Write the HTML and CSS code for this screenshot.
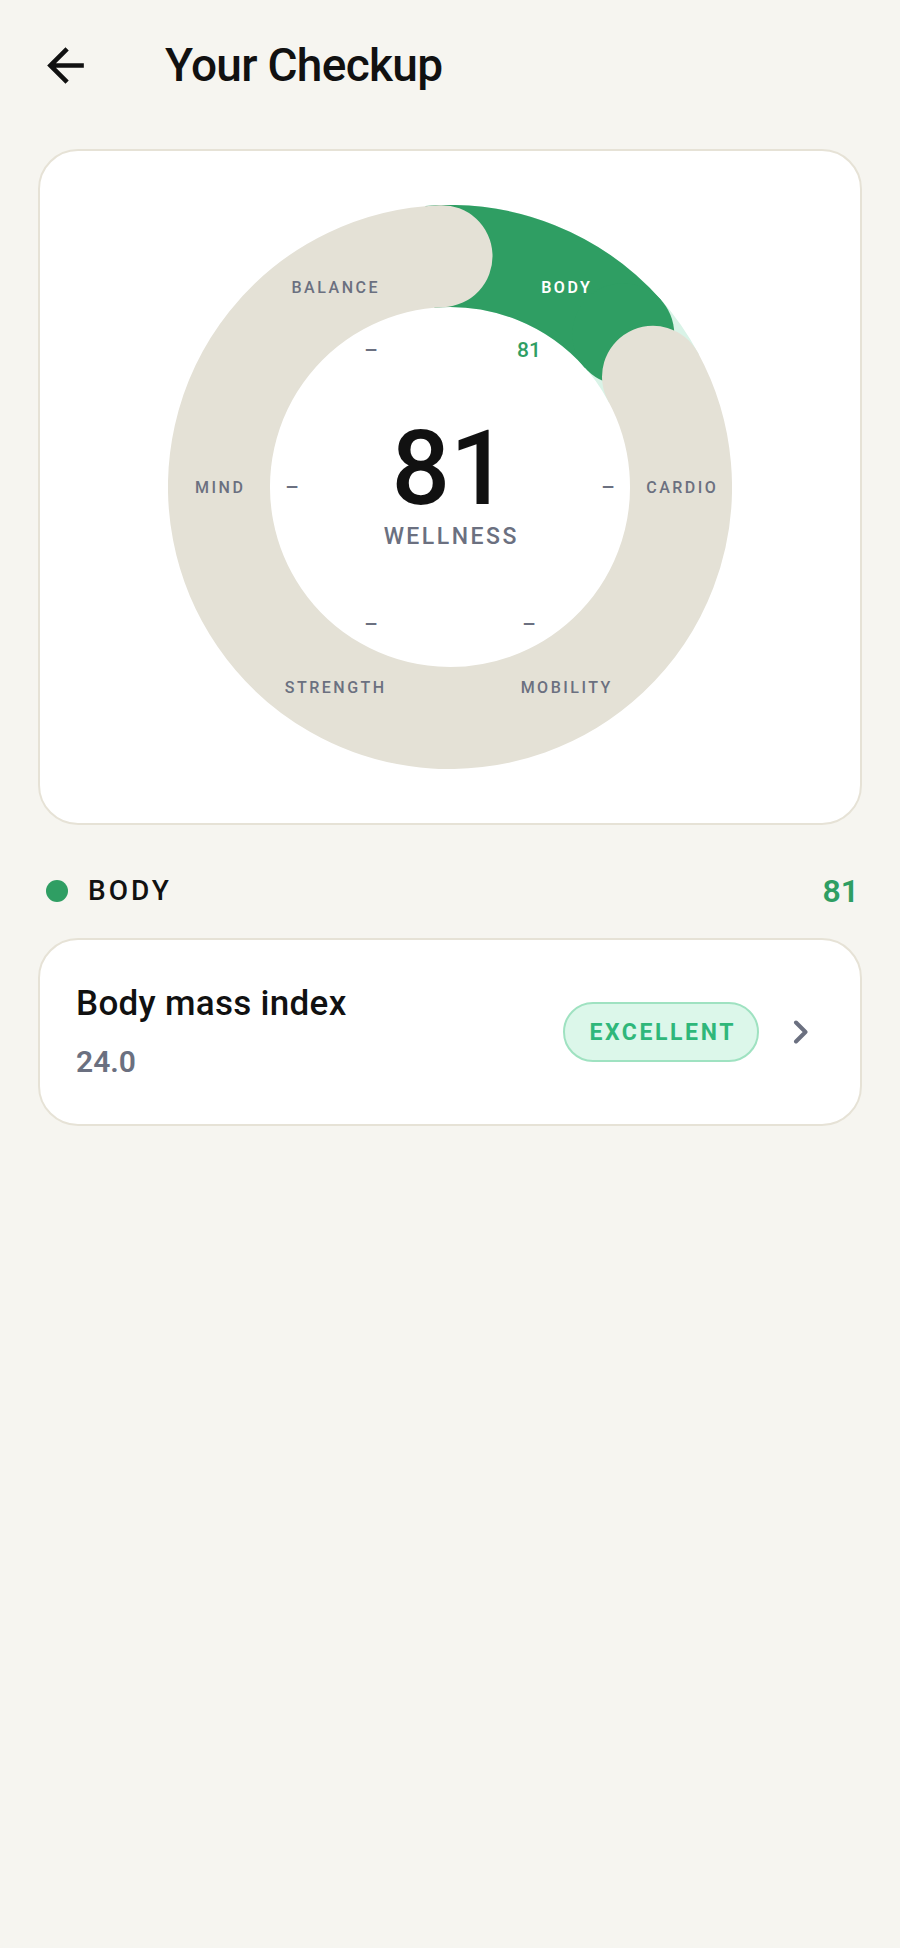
FILE: index.html
```html
<!DOCTYPE html>
<html lang="en">
<head>
<meta charset="utf-8">
<title>Your Checkup</title>
<link rel="stylesheet" href="styles.css">
</head>
<body>
<div class="page">
  <header class="header">
    <svg class="back" viewBox="0 0 24 24" width="55" height="55" aria-label="Back">
      <path d="M20 11H7.83l5.59-5.59L12 4l-8 8 8 8 1.41-1.41L7.83 13H20v-2z" fill="#111111"/>
    </svg>
    <h1 class="title">Your Checkup</h1>
  </header>

  <section class="wheel-card">
    <div class="wheel-wrap">
      <svg class="wheel" viewBox="0 0 564 564" width="564" height="564">
        <path class="track-mint" d="M 273.94 51.14 A 231 231 0 0 1 485.96 173.55"/>
        <path class="arc-green" d="M 261.87 51.88 A 231 231 0 0 1 455.28 129.24"/>
        <circle class="cap-green" cx="455.28" cy="129.24" r="51"/>
        <path class="arc-beige" d="M 485.01 171.78 A 231 231 0 1 1 273.54 51.16"/>

        <text class="seg-label" x="166.5" y="82" dx="1.25" dy="0.355em">BALANCE</text>
        <text class="seg-label active" x="397.5" y="82" dx="1.25" dy="0.355em">BODY</text>
        <text class="seg-label" x="513" y="282" dx="1.25" dy="0.355em">CARDIO</text>
        <text class="seg-label" x="397.5" y="482" dx="1.25" dy="0.355em">MOBILITY</text>
        <text class="seg-label" x="166.5" y="482" dx="1.25" dy="0.355em">STRENGTH</text>
        <text class="seg-label" x="51" y="282" dx="1.25" dy="0.355em">MIND</text>

        <text class="seg-value" x="203" y="145" dy="0.355em">–</text>
        <text class="seg-value green" x="361" y="145" dy="0.355em">81</text>
        <text class="seg-value" x="440" y="282" dy="0.355em">–</text>
        <text class="seg-value" x="361" y="419" dy="0.355em">–</text>
        <text class="seg-value" x="203" y="419" dy="0.355em">–</text>
        <text class="seg-value" x="124" y="282" dy="0.355em">–</text>
      </svg>
      <div class="center">
        <div class="score">81</div>
        <div class="score-label">WELLNESS</div>
      </div>
    </div>
  </section>

  <div class="section-row">
    <div class="section-name">
      <span class="dot"></span>
      <span class="section-title">BODY</span>
    </div>
    <span class="section-score">81</span>
  </div>

  <section class="metric-card">
    <div class="metric-text">
      <div class="metric-name">Body mass index</div>
      <div class="metric-value">24.0</div>
    </div>
    <span class="badge">EXCELLENT</span>
    <svg class="chevron" viewBox="0 0 16 24" width="16" height="24">
      <path d="M3 2.5 L12.5 12 L3 21.5" fill="none" stroke="#6b7080" stroke-width="4" stroke-linecap="round" stroke-linejoin="round"/>
    </svg>
  </section>
</div>
</body>
</html>
```

FILE: styles.css
```css
html, body {
  margin: 0;
  padding: 0;
  background: #f6f5f0;
}

body {
  font-family: "Roboto", "Noto Sans", sans-serif;
  color: #111111;
  min-height: 1948px;
}

.page {
  padding: 0 38px;
}

.header {
  display: flex;
  align-items: center;
  height: 55px;
  padding-top: 38px;
  margin-left: -0.5px;
}

.back {
  display: block;
  flex: none;
}

.title {
  margin: 0 0 0 72.5px;
  font-size: 46px;
  font-weight: 500;
  letter-spacing: -0.7px;
  line-height: 55px;
  color: #111111;
}

.wheel-card {
  margin-top: 56px;
  background: #ffffff;
  border: 2px solid #e6e2d6;
  border-radius: 40px;
  padding: 54px 0;
  display: flex;
  justify-content: center;
}

.wheel-wrap {
  position: relative;
  width: 564px;
  height: 564px;
}

.wheel {
  display: block;
}

.track-mint {
  fill: none;
  stroke: #d9f3e7;
  stroke-width: 102;
}

.arc-green {
  fill: none;
  stroke: #2f9e63;
  stroke-width: 102;
}

.cap-green {
  fill: #2f9e63;
}

.arc-beige {
  fill: none;
  stroke: #e4e1d6;
  stroke-width: 102;
  stroke-linecap: round;
}

.seg-label {
  font-family: "Roboto", sans-serif;
  font-size: 16px;
  font-weight: 500;
  letter-spacing: 2.5px;
  fill: #6b7080;
  text-anchor: middle;
}

.seg-label.active {
  fill: #ffffff;
  font-weight: 600;
}

.seg-value {
  font-family: "Roboto", sans-serif;
  font-size: 21px;
  font-weight: 500;
  fill: #6b7080;
  text-anchor: middle;
}

.seg-value.green {
  fill: #2f9e63;
}

.center {
  position: absolute;
  top: 225px;
  left: 0;
  right: 0;
  display: flex;
  flex-direction: column;
  align-items: center;
}

.score {
  font-size: 103px;
  font-weight: 500;
  line-height: 78px;
  color: #111111;
}

.score-label {
  margin-top: 17px;
  font-size: 23px;
  font-weight: 500;
  line-height: 24px;
  letter-spacing: 2.5px;
  margin-right: -2.5px;
  color: #6b7080;
}

.section-row {
  display: flex;
  align-items: center;
  justify-content: space-between;
  height: 32px;
  margin-top: 50px;
  padding: 0 3px 0 8px;
}

.section-name {
  display: flex;
  align-items: center;
  gap: 20px;
}

.dot {
  width: 22px;
  height: 22px;
  border-radius: 50%;
  background: #2f9e63;
}

.section-title {
  font-size: 28px;
  font-weight: 500;
  letter-spacing: 3px;
  color: #111111;
  line-height: 32px;
}

.section-score {
  font-size: 32px;
  font-weight: 600;
  color: #2f9e63;
  line-height: 32px;
}

.metric-card {
  margin-top: 31px;
  background: #ffffff;
  border: 2px solid #e6e2d6;
  border-radius: 40px;
  height: 184px;
  box-sizing: content-box;
  display: flex;
  align-items: center;
  padding: 0 51px 0 36px;
}

.metric-text {
  flex: 1;
  display: flex;
  flex-direction: column;
  gap: 20px;
}

.metric-name {
  font-size: 35px;
  font-weight: 500;
  letter-spacing: 0.3px;
  line-height: 40px;
  color: #111111;
}

.metric-value {
  font-size: 30px;
  font-weight: 600;
  line-height: 36px;
  color: #6b7080;
}

.badge {
  display: inline-flex;
  align-items: center;
  height: 56px;
  padding: 0 21px 0 24px;
  border: 2px solid #9fe2c1;
  background: #dcf7ea;
  border-radius: 30px;
  font-size: 23px;
  font-weight: 700;
  letter-spacing: 2.6px;
  color: #2fb77a;
}

.chevron {
  display: block;
  margin-left: 34px;
  flex: none;
}
```
